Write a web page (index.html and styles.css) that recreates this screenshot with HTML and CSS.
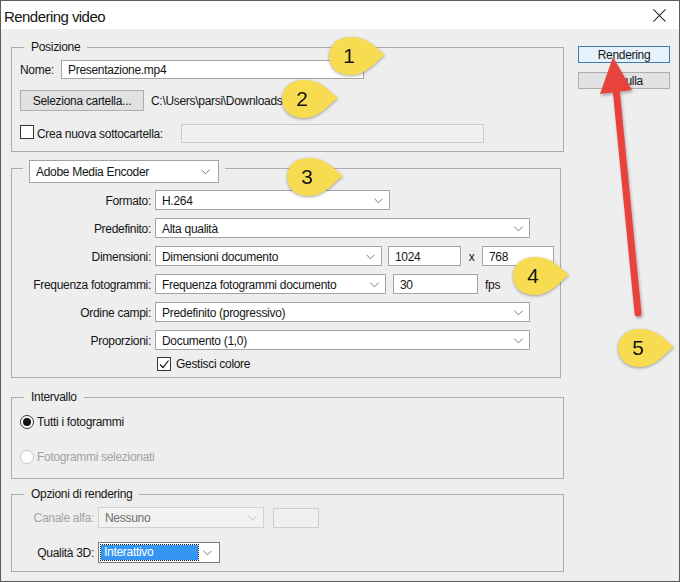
FILE: index.html
```html
<!DOCTYPE html>
<html>
<head>
<meta charset="utf-8">
<title>Rendering video</title>
<link rel="stylesheet" href="styles.css">
</head>
<body>
<div class="window">
  <div class="titlebar">
    <span class="title">Rendering video</span>
    <svg class="close" viewBox="0 0 14 14"><path d="M0.5 0.5L13.5 13.5M13.5 0.5L0.5 13.5" stroke="#222" stroke-width="1.1" fill="none"/></svg>
  </div>
  <div class="content">
    <div class="main">
      <div class="group g1">
        <div class="legend">Posizione</div>
        <div class="row r-nome">
          <span class="lbl-nome">Nome:</span>
          <div class="input w-nome">Presentazione.mp4</div>
        </div>
        <div class="row r-btn">
          <div class="btn btn-folder">Seleziona cartella...</div>
          <span class="path">C:\Users\parsi\Downloads</span>
        </div>
        <div class="row r-chk">
          <span class="check"></span>
          <span class="chk-text">Crea nuova sottocartella:</span>
          <div class="input disabled w-sub"></div>
        </div>
      </div>

      <div class="group g2">
        <div class="legend-sel">
          <div class="select w-ame">Adobe Media Encoder<svg class="chev" viewBox="0 0 10 6"><polyline points="0.5,0.5 5,5 9.5,0.5"/></svg></div>
        </div>
        <div class="frows">
          <div class="frow"><span class="flbl">Formato:</span><div class="select w-fmt">H.264<svg class="chev" viewBox="0 0 10 6"><polyline points="0.5,0.5 5,5 9.5,0.5"/></svg></div></div>
          <div class="frow"><span class="flbl">Predefinito:</span><div class="select w-full">Alta qualità<svg class="chev" viewBox="0 0 10 6"><polyline points="0.5,0.5 5,5 9.5,0.5"/></svg></div></div>
          <div class="frow"><span class="flbl">Dimensioni:</span><div class="select w-dim">Dimensioni documento<svg class="chev" viewBox="0 0 10 6"><polyline points="0.5,0.5 5,5 9.5,0.5"/></svg></div>
            <div class="input w-num1">1024</div><span class="times">x</span><div class="input w-num2">768</div></div>
          <div class="frow"><span class="flbl">Frequenza fotogrammi:</span><div class="select w-fps">Frequenza fotogrammi documento<svg class="chev" viewBox="0 0 10 6"><polyline points="0.5,0.5 5,5 9.5,0.5"/></svg></div>
            <div class="input w-num3">30</div><span class="unit">fps</span></div>
          <div class="frow"><span class="flbl">Ordine campi:</span><div class="select w-full">Predefinito (progressivo)<svg class="chev" viewBox="0 0 10 6"><polyline points="0.5,0.5 5,5 9.5,0.5"/></svg></div></div>
          <div class="frow"><span class="flbl">Proporzioni:</span><div class="select w-full">Documento (1,0)<svg class="chev" viewBox="0 0 10 6"><polyline points="0.5,0.5 5,5 9.5,0.5"/></svg></div></div>
        </div>
        <div class="row r-color">
          <span class="check checked"><svg viewBox="0 0 12 12"><polyline points="2,6.5 5,9.5 10.5,2.5" fill="none" stroke="#111" stroke-width="1.2"/></svg></span>
          <span class="chk-text">Gestisci colore</span>
        </div>
      </div>

      <div class="group g3">
        <div class="legend">Intervallo</div>
        <div class="row r-radio1">
          <span class="radio on"></span><span class="radio-text">Tutti i fotogrammi</span>
        </div>
        <div class="row r-radio2">
          <span class="radio off"></span><span class="radio-text dim">Fotogrammi selezionati</span>
        </div>
      </div>

      <div class="group g4">
        <div class="legend">Opzioni di rendering</div>
        <div class="row r-alpha">
          <span class="olbl dim">Canale alfa:</span>
          <div class="select disabled w-alpha">Nessuno<svg class="chev" viewBox="0 0 10 6"><polyline points="0.5,0.5 5,5 9.5,0.5"/></svg></div>
          <div class="input disabled w-box"></div>
        </div>
        <div class="row r-q3d">
          <span class="olbl">Qualità 3D:</span>
          <div class="select focus w-q3d"><span class="hl">Interattivo</span><svg class="chev" viewBox="0 0 10 6"><polyline points="0.5,0.5 5,5 9.5,0.5"/></svg></div>
        </div>
      </div>
    </div>

    <div class="side">
      <div class="btn btn-primary">Rendering</div>
      <div class="btn btn-side">Annulla</div>
    </div>
  </div>
</div>

<svg class="arrow" viewBox="0 0 680 582">
  <defs>
    <filter id="sh" x="-20%" y="-20%" width="140%" height="140%">
      <feDropShadow dx="1" dy="2" stdDeviation="1.5" flood-color="#000" flood-opacity="0.3"/>
    </filter>
  </defs>
  <g filter="url(#sh)">
    <line x1="638" y1="313" x2="616" y2="88" stroke="#e8433d" stroke-width="7" stroke-linecap="round"/>
    <polygon points="613,57 600,94 632,90" fill="#e8433d"/>
  </g>
</svg>

<div class="callout c1"><svg viewBox="0 0 60 40"><path d="M58,19 C50,13 42,1 24,1 C10,1 2,9 2,20 C2,31 10,39 24,39 C40,39 49,25 58,19 Z"/></svg><span class="num">1</span></div>
<div class="callout c2"><svg viewBox="0 0 60 40"><path d="M58,19 C50,13 42,1 24,1 C10,1 2,9 2,20 C2,31 10,39 24,39 C40,39 49,25 58,19 Z"/></svg><span class="num">2</span></div>
<div class="callout c3"><svg viewBox="0 0 60 40"><path d="M58,19 C50,13 42,1 24,1 C10,1 2,9 2,20 C2,31 10,39 24,39 C40,39 49,25 58,19 Z"/></svg><span class="num">3</span></div>
<div class="callout c4"><svg viewBox="0 0 60 40"><path d="M58,19 C50,13 42,1 24,1 C10,1 2,9 2,20 C2,31 10,39 24,39 C40,39 49,25 58,19 Z"/></svg><span class="num">4</span></div>
<div class="callout c5"><svg viewBox="0 0 60 40"><path d="M58,19 C50,13 42,1 24,1 C10,1 2,9 2,20 C2,31 10,39 24,39 C40,39 49,25 58,19 Z"/></svg><span class="num">5</span></div>
</body>
</html>
```

FILE: styles.css
```css
* { box-sizing: border-box; }
html, body { margin: 0; padding: 0; }
body {
  position: relative;
  width: 680px;
  height: 582px;
  overflow: hidden;
  font-family: "Liberation Sans", Arial, sans-serif;
  font-size: 12px;
  letter-spacing: -0.3px;
  color: #151515;
  background: #eeeeee;
}
.window {
  width: 680px;
  height: 582px;
  border: 1px solid #5c5c5c;
  background: #eeeeee;
  display: flex;
  flex-direction: column;
}
.titlebar {
  flex: none;
  height: 28px;
  background: #ffffff;
  display: flex;
  align-items: center;
  justify-content: space-between;
  padding: 0 13px 0 3px;
}
.title { font-size: 15px; letter-spacing: -0.55px; color: #151515; margin-top: 2px; }
.close { width: 13px; height: 13px; }

.content { display: flex; padding-left: 10px; }
.main { width: 553px; display: flex; flex-direction: column; padding-top: 18px; }
.side { width: 92px; margin-left: 14px; padding-top: 17px; display: flex; flex-direction: column; gap: 9px; }

/* groups */
.group {
  border: 1px solid #acacac;
  display: flex;
  flex-direction: column;
  align-items: flex-start;
}
.legend {
  margin: -9px 0 0 12px;
  padding: 0 7px 0 7px;
  background: #eeeeee;
  line-height: 16px;
  white-space: nowrap;
}
.g1 { height: 105px; padding-left: 8px; }
.g1 .legend { margin-left: 4px; }
.g2 { height: 210px; width: 550px; margin-top: 16px; }
.g3 { height: 82px; margin-top: 19px; padding-left: 8px; }
.g3 .legend { margin-left: 4px; }
.g4 { height: 78px; margin-top: 15px; }

.row { display: flex; align-items: center; }

/* generic controls */
.input {
  height: 19px;
  border: 1px solid #a3a3a3;
  background: #ffffff;
  padding: 0 6px;
  display: flex;
  align-items: center;
  white-space: nowrap;
}
.input.disabled { background: #f0f0f0; border-color: #cdcdcd; }
.select {
  height: 20px;
  border: 1px solid #a3a3a3;
  background: #ffffff;
  padding: 1px 6px 0 6px;
  display: flex;
  align-items: center;
  justify-content: space-between;
  white-space: nowrap;
}
.chev { width: 9px; height: 6px; flex: none; }
.chev polyline { fill: none; stroke: #6a6a6a; stroke-width: 1; }
.select.disabled { background: #f2f2f2; border-color: #d0d0d0; color: #6e6e6e; }
.select.disabled .chev polyline { stroke: #b9b9b9; }
.btn {
  display: flex;
  align-items: center;
  justify-content: center;
  border: 1px solid #adadad;
  background: #e1e1e1;
  white-space: nowrap;
}
.check {
  flex: none;
  width: 14px;
  height: 14px;
  border: 1px solid #333333;
  background: #ffffff;
  display: flex;
  align-items: center;
  justify-content: center;
}
.check svg { width: 12px; height: 12px; }
.dim { color: #a3a3a3; }

/* group 1 */
.r-nome { margin-top: 5px; }
.lbl-nome { width: 41px; }
.w-nome { width: 303px; }
.r-btn { margin-top: 11px; }
.btn-folder { width: 124px; height: 21px; }
.path { margin-left: 7px; }
.r-chk { margin-top: 13px; height: 19px; }
.r-chk .check { margin-top: -3px; }
.r-chk .chk-text { margin-left: 3px; width: 144px; }
.w-sub { width: 303px; }

/* group 2 */
.legend-sel { margin: -9px 0 0 11px; padding: 0 6px; background: #eeeeee; }
.w-ame { width: 190px; height: 23px; padding-right: 8px; }
.frows { display: flex; flex-direction: column; gap: 8px; margin-top: 7px; }
.frow { display: flex; align-items: center; height: 20px; }
.flbl { width: 139px; text-align: right; margin-right: 4px; white-space: nowrap; padding-top: 1px; }
.w-fmt { width: 235px; }
.w-full { width: 375px; }
.w-dim { width: 227px; }
.w-num1 { width: 73px; height: 20px; margin-left: 6px; padding-top: 1px; }
.times { width: 21px; text-align: center; padding-top: 1px; }
.w-num2 { width: 72px; height: 20px; padding-top: 1px; }
.w-fps { width: 231px; }
.w-num3 { width: 85px; height: 20px; margin-left: 7px; padding-top: 1px; }
.unit { margin-left: 7px; padding-top: 1px; }
.r-color { margin: 6px 0 0 145px; height: 16px; }
.r-color .chk-text { margin-left: 5px; }

/* group 3 */
.radio {
  flex: none;
  width: 14px;
  height: 14px;
  border-radius: 50%;
  border: 1px solid #333333;
  background: #ffffff;
  display: flex;
  align-items: center;
  justify-content: center;
}
.radio.on::after {
  content: "";
  width: 8px;
  height: 8px;
  border-radius: 50%;
  background: #111111;
}
.radio.off { border-color: #c8c8c8; }
.radio-text { margin-left: 3px; }
.r-radio1 { margin-top: 9px; height: 16px; }
.r-radio2 { margin-top: 19px; height: 16px; }

/* group 4 */
.olbl { width: 82px; text-align: right; margin-right: 4px; white-space: nowrap; }
.r-alpha { margin-top: 5px; }
.w-alpha { width: 166px; height: 21px; }
.w-box { width: 46px; height: 20px; margin-left: 9px; background: #ececec; border-color: #c6c6c6; }
.r-q3d { margin-top: 14px; }
.w-q3d { width: 122px; height: 21px; border-color: #7a7a7a; padding: 0 7px 0 2px; }
.hl {
  width: 97px;
  height: 15px;
  background: #3595f3;
  color: #ffffff;
  padding-left: 3px;
  line-height: 14px;
  outline: 1px dotted #1a1a1a;
}

/* side buttons */
.btn-primary { height: 17px; background: #e5f1fb; border-color: #3c7fb1; }
.btn-side { height: 17px; }

/* annotations */
.arrow { position: absolute; left: 0; top: 0; width: 680px; height: 582px; pointer-events: none; }
.callout {
  position: absolute;
  width: 60px;
  height: 40px;
  filter: drop-shadow(0 1px 1.5px rgba(0,0,0,0.35));
}
.callout svg { position: absolute; left: 0; top: 0; width: 60px; height: 40px; }
.callout path { fill: #f7dc52; }
.callout .num {
  position: absolute;
  left: 12px;
  top: 9px;
  width: 20px;
  text-align: center;
  font-family: "Liberation Sans", Arial, sans-serif;
  font-size: 21px;
  letter-spacing: 0;
  line-height: 22px;
  color: #111;
}
.c1 { left: 327px; top: 36px; }
.c2 { left: 280px; top: 79px; }
.c3 { left: 285px; top: 157px; }
.c4 { left: 511px; top: 256px; }
.c5 { left: 616px; top: 328px; }
```
